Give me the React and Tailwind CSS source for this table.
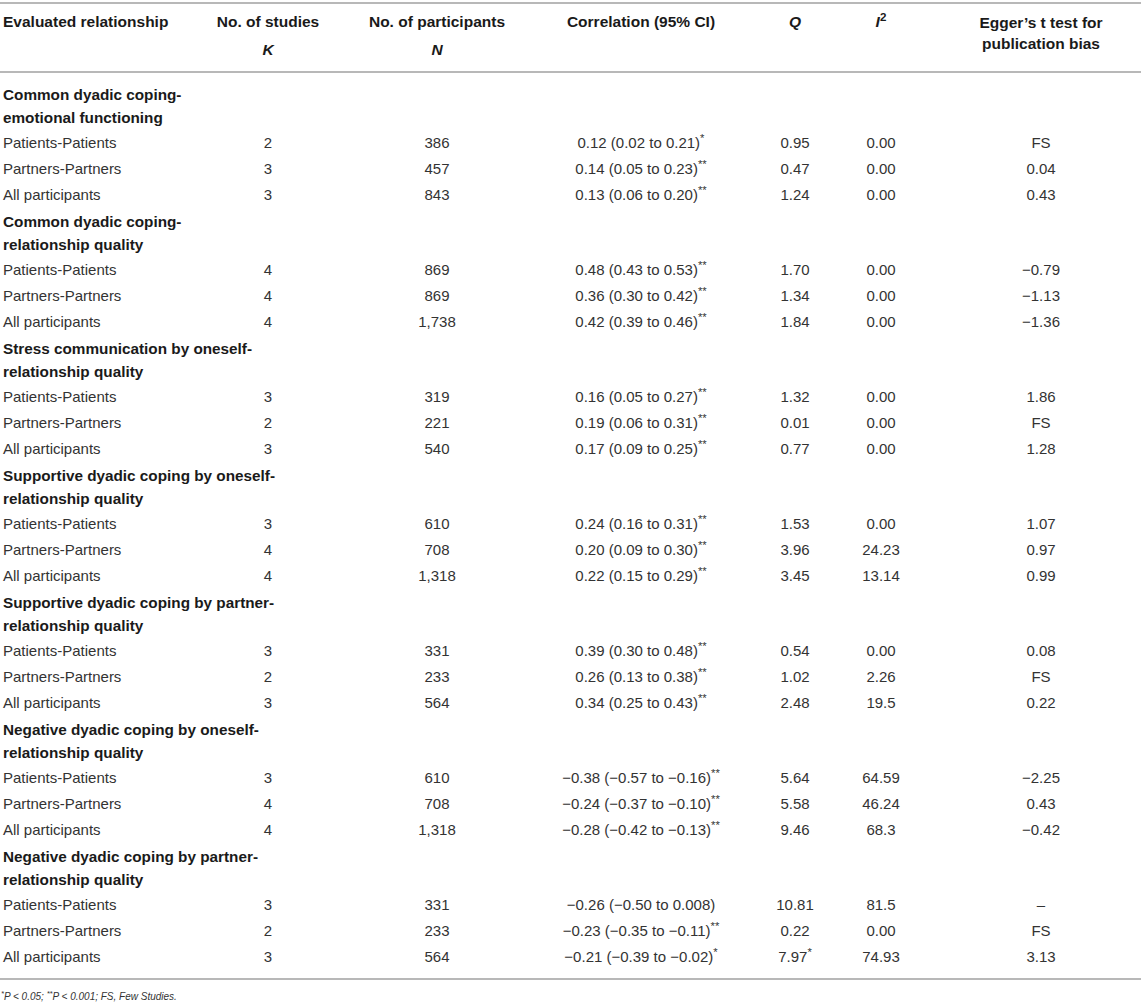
import React from "react";

const COLS = "grid grid-cols-[200px_136px_202px_206px_102px_70px_225px]";

const groups = [
  {
    title: ["Common dyadic coping-", "emotional functioning"],
    rows: [
      ["Patients-Patients", "2", "386", "0.12 (0.02 to 0.21)", "*", "0.95", "", "0.00", "FS"],
      ["Partners-Partners", "3", "457", "0.14 (0.05 to 0.23)", "**", "0.47", "", "0.00", "0.04"],
      ["All participants", "3", "843", "0.13 (0.06 to 0.20)", "**", "1.24", "", "0.00", "0.43"],
    ],
  },
  {
    title: ["Common dyadic coping-", "relationship quality"],
    rows: [
      ["Patients-Patients", "4", "869", "0.48 (0.43 to 0.53)", "**", "1.70", "", "0.00", "\u22120.79"],
      ["Partners-Partners", "4", "869", "0.36 (0.30 to 0.42)", "**", "1.34", "", "0.00", "\u22121.13"],
      ["All participants", "4", "1,738", "0.42 (0.39 to 0.46)", "**", "1.84", "", "0.00", "\u22121.36"],
    ],
  },
  {
    title: ["Stress communication by oneself-", "relationship quality"],
    rows: [
      ["Patients-Patients", "3", "319", "0.16 (0.05 to 0.27)", "**", "1.32", "", "0.00", "1.86"],
      ["Partners-Partners", "2", "221", "0.19 (0.06 to 0.31)", "**", "0.01", "", "0.00", "FS"],
      ["All participants", "3", "540", "0.17 (0.09 to 0.25)", "**", "0.77", "", "0.00", "1.28"],
    ],
  },
  {
    title: ["Supportive dyadic coping by oneself-", "relationship quality"],
    rows: [
      ["Patients-Patients", "3", "610", "0.24 (0.16 to 0.31)", "**", "1.53", "", "0.00", "1.07"],
      ["Partners-Partners", "4", "708", "0.20 (0.09 to 0.30)", "**", "3.96", "", "24.23", "0.97"],
      ["All participants", "4", "1,318", "0.22 (0.15 to 0.29)", "**", "3.45", "", "13.14", "0.99"],
    ],
  },
  {
    title: ["Supportive dyadic coping by partner-", "relationship quality"],
    rows: [
      ["Patients-Patients", "3", "331", "0.39 (0.30 to 0.48)", "**", "0.54", "", "0.00", "0.08"],
      ["Partners-Partners", "2", "233", "0.26 (0.13 to 0.38)", "**", "1.02", "", "2.26", "FS"],
      ["All participants", "3", "564", "0.34 (0.25 to 0.43)", "**", "2.48", "", "19.5", "0.22"],
    ],
  },
  {
    title: ["Negative dyadic coping by oneself-", "relationship quality"],
    rows: [
      ["Patients-Patients", "3", "610", "\u22120.38 (\u22120.57 to \u22120.16)", "**", "5.64", "", "64.59", "\u22122.25"],
      ["Partners-Partners", "4", "708", "\u22120.24 (\u22120.37 to \u22120.10)", "**", "5.58", "", "46.24", "0.43"],
      ["All participants", "4", "1,318", "\u22120.28 (\u22120.42 to \u22120.13)", "**", "9.46", "", "68.3", "\u22120.42"],
    ],
  },
  {
    title: ["Negative dyadic coping by partner-", "relationship quality"],
    rows: [
      ["Patients-Patients", "3", "331", "\u22120.26 (\u22120.50 to 0.008)", "", "10.81", "", "81.5", "\u2013"],
      ["Partners-Partners", "2", "233", "\u22120.23 (\u22120.35 to \u22120.11)", "**", "0.22", "", "0.00", "FS"],
      ["All participants", "3", "564", "\u22120.21 (\u22120.39 to \u22120.02)", "*", "7.97", "*", "74.93", "3.13"],
    ],
  },
];

function Row({ r }) {
  return (
    <div className={`${COLS} h-[26px] items-center`}>
      <div className="pl-[3px] whitespace-nowrap">{r[0]}</div>
      <div className="text-center">{r[1]}</div>
      <div className="text-center">{r[2]}</div>
      <div className="text-center whitespace-nowrap">
        {r[3]}
        {r[4] && <sup>{r[4]}</sup>}
      </div>
      <div className="text-center">
        {r[5]}
        {r[6] && <sup>{r[6]}</sup>}
      </div>
      <div className="text-center">{r[7]}</div>
      <div className="text-center pl-[25px]">{r[8]}</div>
    </div>
  );
}

export default function App() {
  return (
    <div className="w-[1143px] bg-white font-['Liberation_Sans',Arial,sans-serif] text-[15px] text-[#333] pt-[2px]">
      <div className="w-[1141px]">
        {/* Header */}
        <div className={`${COLS} h-[71px] border-t-2 border-b-2 border-[#b8b8b8] pt-[8px] items-start font-bold text-[15.5px] text-[#1a1a1a] leading-[20px]`}>
          <div className="pl-[3px] whitespace-nowrap">Evaluated relationship</div>
          <div className="text-center">
            <div>No. of studies</div>
            <div className="mt-[8px] italic">K</div>
          </div>
          <div className="text-center">
            <div>No. of participants</div>
            <div className="mt-[8px] italic">N</div>
          </div>
          <div className="text-center">Correlation (95% CI)</div>
          <div className="text-center italic">Q</div>
          <div className="text-center">
            <span className="italic">I</span>
            <sup>2</sup>
          </div>
          <div className="text-center pl-[25px] leading-[21px]">
            Egger’s t test for
            <br />
            publication bias
          </div>
        </div>

        {/* Body */}
        <div className="pt-[8px] pb-[8px] border-b-2 border-[#b8b8b8]">
          {groups.map((g, i) => (
            <div key={i}>
              <div className="pl-[3px] pt-[2px] pb-[1px] font-bold text-[15.3px] text-[#1a1a1a] leading-[23px] whitespace-nowrap">
                {g.title[0]}
                <br />
                {g.title[1]}
              </div>
              {g.rows.map((r, j) => (
                <Row key={j} r={r} />
              ))}
            </div>
          ))}
        </div>

        {/* Footnote */}
        <div className="pl-[1px] pt-[8px] text-[10px] italic leading-[17px] text-[#333]">
          <sup>*</sup>P &lt; 0.05; <sup>**</sup>P &lt; 0.001; FS, Few Studies.
        </div>
      </div>
    </div>
  );
}
